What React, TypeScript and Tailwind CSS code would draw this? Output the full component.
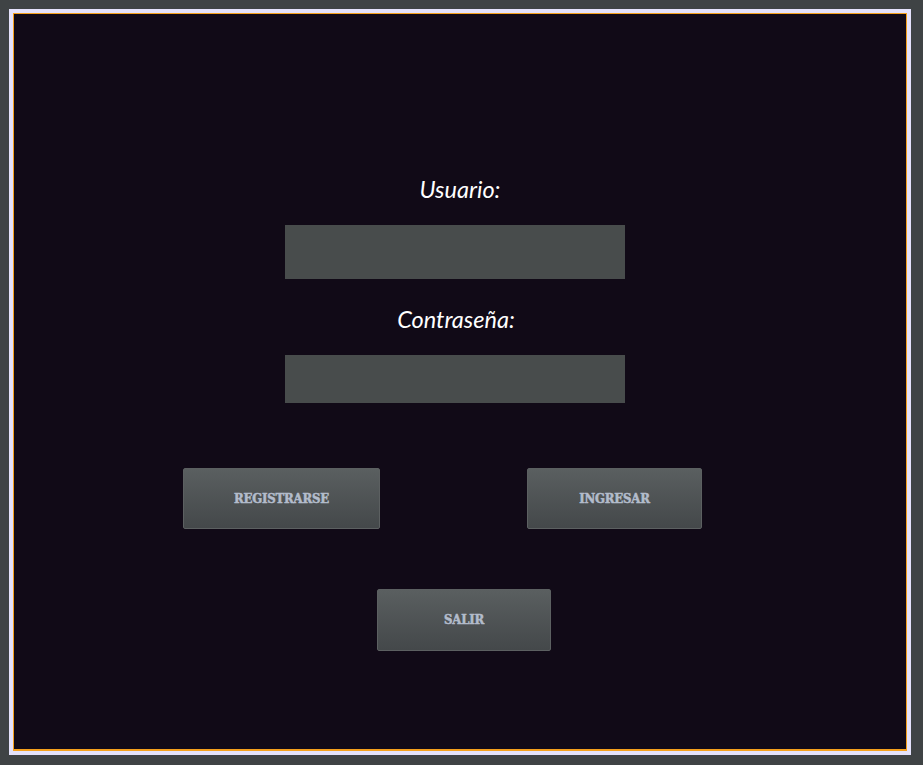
export default function App() {
  const btn =
    "flex h-[61px] items-center justify-center rounded-[2px] border border-[#5c6061] bg-gradient-to-b from-[#5a5f60] to-[#44484a] text-[13px] font-black uppercase tracking-[-0.2px] text-[#b3bccb] [-webkit-text-stroke:0.5px_#b3bccb] [font-family:'DejaVu_Serif_Condensed','DejaVu_Serif',serif]";

  return (
    <div className="min-h-[765px] w-[923px] bg-[#3f4345] pt-[9px] pl-[9px]">
      <div className="h-[746px] w-[902px] border-4 border-[#e4e2fb]">
        <div className="flex h-full w-full flex-col border border-b-2 border-[#f5a01c] bg-[#110a17] pt-[160px]">
          <p className="h-[30px] text-center text-[23.5px] leading-[30px] italic text-white [font-family:Lato,sans-serif]">
            Usuario:
          </p>
          <div className="mt-[21px] ml-[271px] h-[54px] w-[340px] bg-[#484c4c]" />
          <p className="mt-[25px] h-[30px] pr-[8px] text-center text-[23.5px] leading-[30px] italic text-white [font-family:Lato,sans-serif]">
            Contraseña:
          </p>
          <div className="mt-[21px] ml-[271px] h-[48px] w-[340px] bg-[#484c4c]" />
          <div className="mt-[65px] ml-[169px] flex gap-[147px]">
            <button className={`${btn} w-[197px]`}>Registrarse</button>
            <button className={`${btn} w-[175px]`}>Ingresar</button>
          </div>
          <div className="mt-[60px] ml-[363px]">
            <button className={`${btn} h-[62px] w-[174px]`}>Salir</button>
          </div>
        </div>
      </div>
    </div>
  );
}
